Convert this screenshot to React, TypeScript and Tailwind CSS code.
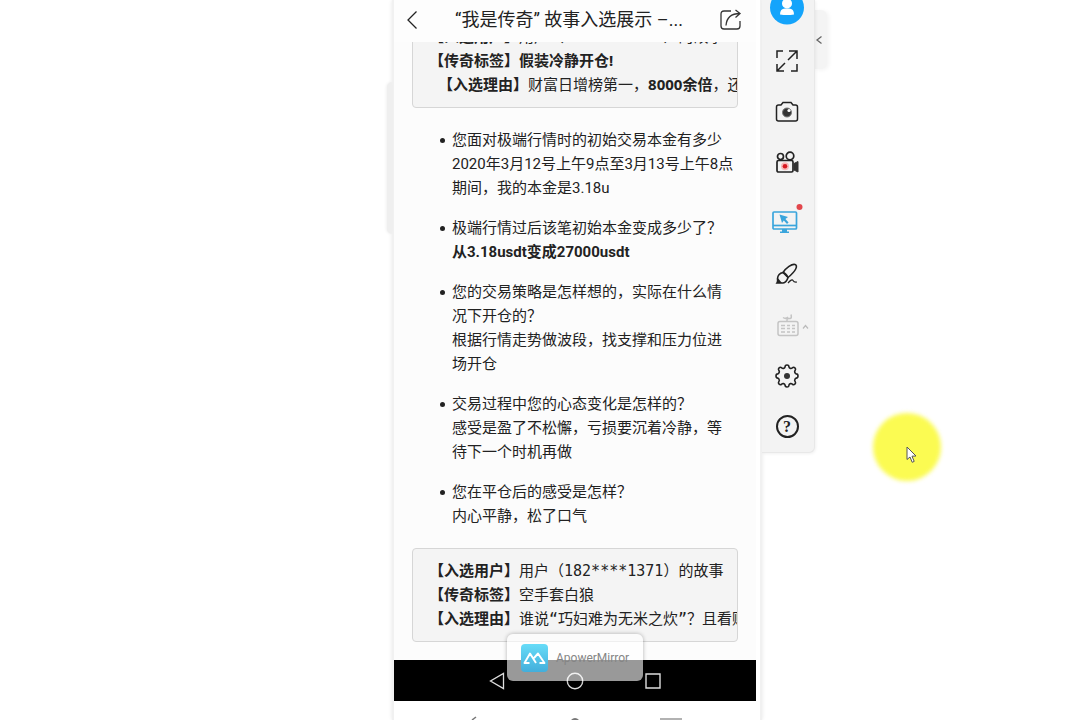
import React from "react";

const stories = [
  {
    question: "您面对极端行情时的初始交易本金有多少",
    answer: "2020年3月12号上午9点至3月13号上午8点期间，我的本金是3.18u",
  },
  {
    question: "极端行情过后该笔初始本金变成多少了？",
    answer: "从3.18usdt变成27000usdt",
    strong: true,
  },
  {
    question: "您的交易策略是怎样想的，实际在什么情况下开仓的？",
    answer: "根据行情走势做波段，找支撑和压力位进场开仓",
  },
  {
    question: "交易过程中您的心态变化是怎样的？",
    answer: "感受是盈了不松懈，亏损要沉着冷静，等待下一个时机再做",
  },
  {
    question: "您在平仓后的感受是怎样？",
    answer: "内心平静，松了口气",
  },
];

const Header = () => (
  <header className="relative z-10 flex h-[42px] shrink-0 items-center justify-between bg-[#fdfdfd] pr-[14px] pb-[2px] pl-3">
    <button type="button" aria-label="返回">
      <svg width="12" height="20" viewBox="0 0 12 20" fill="none" stroke="#222" strokeWidth="1.3">
        <path d="M10.500 1.500 2 10l8.500 8.500" />
      </svg>
    </button>
    <h1 className="text-lg text-[#222]">“我是传奇” 故事入选展示 –...</h1>
    <button type="button" aria-label="分享">
      <svg width="22" height="22" viewBox="1 0 22 22" fill="none" stroke="#333" strokeWidth="1.3">
        <path d="M12 2H5Q2 2 2 5v12q0 3 3 3h13q3 0 3-3v-5" />
        <path d="M7 16.500C7.500 9.500 12 4.500 21 4.500M16.500 1l4.500 3.500-4.500 4" />
      </svg>
    </button>
  </header>
);

const StoryCard = ({ children }: { children: React.ReactNode }) => (
  <pre className="shrink-0 overflow-hidden rounded-sm border border-[#d6d6d6] bg-[#f4f4f4] pt-[9px] pb-[11px] pl-4 font-['Noto_Sans','Noto_Sans_CJK_SC',sans-serif] text-[15px] leading-6">
    {children}
  </pre>
);

const Mono = ({ children }: { children: React.ReactNode }) => (
  <span className="font-['DejaVu_Sans_Mono',monospace] leading-none">{children}</span>
);

const Toast = () => (
  <div className="absolute bottom-[20px] left-1/2 z-20 flex h-[47px] w-[136px] -translate-x-1/2 items-center gap-2 rounded-md bg-white/60 pl-[14px] shadow-[0_0_4px_rgba(0,0,0,0.3)]">
    <svg width="27" height="28" viewBox="0 0 27 28" className="shrink-0">
      <defs>
        <linearGradient id="logo" x1="0" y1="0" x2="0" y2="1">
          <stop offset="0" stopColor="#67dcf8" />
          <stop offset="1" stopColor="#43aedb" />
        </linearGradient>
      </defs>
      <rect width="27" height="28" rx="4" fill="url(#logo)" />
      <path d="M8.500 19H3.500L9 9.500 15 19M13 14l4-4.500L23.500 19h-5" fill="none" stroke="#fff" strokeWidth="1.900" strokeLinejoin="round" />
    </svg>
    <span className="text-xs text-[#858585]">ApowerMirror</span>
  </div>
);

const NavBar = () => (
  <nav className="relative flex h-[41px] shrink-0 items-center justify-center gap-[61px] bg-black">
    <button type="button" aria-label="Back">
      <svg width="16" height="18" viewBox="0 0 16 18" fill="none" stroke="#ddd" strokeWidth="1.3">
        <path d="M14.500 1.500v15L1.500 9z" />
      </svg>
    </button>
    <button type="button" aria-label="Home">
      <svg width="18" height="18" viewBox="0 0 18 18" fill="none" stroke="#ddd" strokeWidth="1.4">
        <circle cx="9" cy="9" r="7.700" />
      </svg>
    </button>
    <button type="button" aria-label="Recent">
      <svg width="16" height="16" viewBox="0 0 16 16" fill="none" stroke="#ddd" strokeWidth="1.4">
        <path d="M1 1h14v14H1z" />
      </svg>
    </button>
    <Toast />
  </nav>
);

const Phone = () => (
  <section className="relative flex h-screen min-w-0 flex-col border-x-2 border-[#f1f1f1] bg-white pr-1 shadow-[0_0_4px_rgba(0,0,0,0.1)]">
    {/* dock handle behind the left edge */}
    <div className="absolute top-[82px] -left-[7px] h-[152px] w-[5px] rounded-l-md bg-[#efefef] shadow-[-1px_0_3px_rgba(0,0,0,0.06)]" />
    <Header />
    <main className="flex min-h-0 flex-1 flex-col justify-end gap-5 overflow-hidden bg-[#fcfcfc] px-[18px] pb-[18px] text-[15px] leading-6 text-[#222]">
      <StoryCard>
        <b>【入选用户】</b>用户（<Mono>138****5206</Mono>）的故事{"\n"}
        <b>【传奇标签】假装冷静开仓!</b>{"\n"}
        <Mono> </Mono><b>【入选理由】</b>财富日增榜第一，<b>8000余倍</b>，还有谁
      </StoryCard>
      <ul className="-mr-[3px] shrink-0 list-none space-y-4 pl-[40px]">
        {stories.map((story) => (
          <li key={story.question} className="relative pr-[11px]">
            <span className="absolute top-[10px] -left-[12px] size-[5px] rounded-full bg-[#222]" />
            <p>{story.question}</p>
            <p className={story.strong ? "-mr-[11px] font-bold" : "-mr-[11px] pr-[5px]"}>{story.answer}</p>
          </li>
        ))}
      </ul>
      <StoryCard>
        <b>【入选用户】</b>用户（<Mono>182****1371</Mono>）的故事{"\n"}
        <b>【传奇标签】</b>空手套白狼{"\n"}
        <b>【入选理由】</b>谁说<Mono>“</Mono>巧妇难为无米之炊<Mono>”</Mono>？且看赌神
      </StoryCard>
    </main>
    <NavBar />
    <footer className="flex h-[19px] shrink-0 items-end justify-center gap-[78px] overflow-hidden">
      <svg width="22" height="4" viewBox="0 0 22 4" stroke="#777" strokeWidth="1.500">
        <path d="m4 4 4-3" />
      </svg>
      <svg width="14" height="3" viewBox="0 0 14 3" fill="#777">
        <path d="M3 3q4-4 8 0z" />
      </svg>
      <svg width="22" height="3" viewBox="0 0 22 3" stroke="#999" strokeWidth="1.500">
        <path d="M0 2h22" />
      </svg>
    </footer>
  </section>
);

const ToolButton = ({ label, tall, children }: { label: string; tall?: boolean; children: React.ReactNode }) => (
  <button
    type="button"
    aria-label={label}
    className={`flex w-full shrink-0 items-center justify-center ${tall ? "h-[60px]" : "h-[51px]"}`}
  >
    {children}
  </button>
);

const Toolbar = () => (
  <aside className="relative self-start">
    <button
      type="button"
      aria-label="Collapse"
      className="absolute top-[10px] -right-[12px] flex h-[59px] w-[13px] items-center justify-center rounded-r-md bg-[#f4f4f4] pr-[3px] shadow-[2px_1px_4px_rgba(0,0,0,0.05)]"
    >
      <svg width="8" height="10" viewBox="0 0 8 10" fill="none" stroke="#666" strokeWidth="1.300" className="shrink-0">
        <path d="M6.500 1.500 2 5l4.500 3.500" />
      </svg>
    </button>
    <div className="relative flex flex-col items-center overflow-hidden rounded-br-md border-r border-b border-[#e8e8e8] bg-[#f3f3f3] pr-[2px] shadow-[1px_1px_3px_rgba(0,0,0,0.06)]">
      <button type="button" aria-label="Account" className="-mt-[10px] mb-[10px]">
        <svg width="34" height="35" viewBox="0 0 34 35">
          <circle cx="17" cy="17.500" r="17" fill="#14a4fb" />
          <circle cx="17" cy="13.500" r="5" fill="#fff" />
          <path d="M10 24.500q0-6 5-6h4q5 0 5 6-7 1-14 0" fill="#fff" />
        </svg>
      </button>
      <ToolButton label="Full screen">
        <svg width="24" height="24" viewBox="0 0 24 24" fill="none" stroke="#222" strokeWidth="1.500">
          <path d="M2 9V2h6M14 2h8v8M22 15v7h-6M9 22H2v-7M22 2l-9 9M2 22l8-8" />
        </svg>
      </ToolButton>
      <ToolButton label="Screenshot">
        <svg width="24" height="24" viewBox="0 0 24 24" fill="none" stroke="#222" strokeWidth="1.500">
          <path d="M3.500 5H6l2-2.500h8L18 5h2.500q2 0 2 2v12q0 2-2 2h-17q-2 0-2-2V7q0-2 2-2z" />
          <circle cx="12" cy="12.500" r="4.500" fill="#333" stroke="#777" strokeWidth="1" />
          <circle cx="14" cy="10.500" r="1.600" fill="#fff" stroke="none" />
        </svg>
      </ToolButton>
      <ToolButton label="Record">
        <svg width="24" height="24" viewBox="0 0 24 24" fill="none" stroke="#222" strokeWidth="1.700">
          <circle cx="5.500" cy="5.500" r="3" />
          <circle cx="15" cy="5" r="3.800" />
          <rect x="2" y="9.500" width="16" height="11.500" rx="1.500" />
          <path d="m19 12.500 4-2v10.500l-4-2z" fill="#333" stroke="#333" strokeWidth="1" />
          <circle cx="10" cy="15.200" r="4" fill="#f8b8b8" stroke="none" />
          <circle cx="10" cy="15.200" r="2.300" fill="#d71920" stroke="none" />
        </svg>
      </ToolButton>
      <ToolButton label="Whiteboard" tall>
        <svg width="32" height="36" viewBox="0 -4 32 36" fill="none" stroke="#3aa5dc" strokeWidth="1.700">
          <rect x="2" y="8" width="23.500" height="17" rx="1" />
          <path d="M2 21.500h23.500" />
          <path d="M11 25h5v2.500h2V29H9v-1.500h2z" fill="#3aa5dc" stroke="none" />
          <path d="m8.500 10.500 2.500 8.500 1.800-2.500 3.200 3.500 1.600-1.600-3.200-3.500 2.600-1.900z" fill="#3aa5dc" stroke="none" />
          <circle cx="28.500" cy="3" r="3" fill="#e2464b" stroke="none" />
        </svg>
      </ToolButton>
      <ToolButton label="Brush">
        <svg width="24" height="24" viewBox="0 0 24 24" fill="none" stroke="#222" strokeWidth="1.600">
          <path d="M8 10.500C11 6 17 1.500 20 2.500s1.500 6-7 13z" />
          <path d="M8 10.500q3 .5 5 5-1.500 5-5 5.500H2q1-1.500.500-4.500Q3 11.500 8 10.500z" />
          <path d="M2 21v-6l5 6z" fill="#222" stroke="none" />
          <path d="M13 21q4-4.500 5-2.500t4 1.500" strokeWidth="1.200" />
        </svg>
      </ToolButton>
      <div className="relative w-full">
        <ToolButton label="Keyboard">
          <svg width="24" height="24" viewBox="0 0 24 24" fill="none" stroke="#c4c4c4" strokeWidth="1.500">
            <rect x="3" y="8.500" width="20" height="14" rx="2" />
            <path d="M12 8V6.500q0-1 2-1h1q2 0 1-4M8 4.500q3 2 5-.5" />
            <path d="M6 12.500h4m2 0h3m2 0h3M6 15.500h4m2 0h3m2 0h3M6 19h4m2 0h3m2 0h3" strokeWidth="1.700" />
          </svg>
        </ToolButton>
        <svg className="absolute top-[25px] right-[3px]" width="7" height="5" viewBox="0 0 7 5" fill="none" stroke="#bbb" strokeWidth="1.200">
          <path d="m1 4.500 2.500-3L6 4.500" />
        </svg>
      </div>
      <ToolButton label="Settings">
        <svg width="24" height="24" viewBox="0 0 24 24" fill="none" stroke="#222" strokeWidth="1.600" strokeLinejoin="round">
          <path d="M10 3.200Q10 1 12 1t2 2.200q.2.900 1.500 1.200 1 .2 1.800-.5 1.300-1.300 2.600-.1t.2 2.800q-.7.900-.3 1.800.5 1.300 1.400 1.500Q23 10 23 12t-1.800 2.100q-.9.200-1.400 1.500-.4.900.3 1.800 1.100 1.600-.2 2.800t-2.600-.1q-.8-.7-1.800-.5-1.300.3-1.500 1.200Q14 23 12 23t-2-2.200q-.2-.9-1.500-1.200-1-.2-1.800.5-1.300 1.300-2.600.1t-.2-2.800q.7-.9.300-1.800-.5-1.300-1.400-1.500Q1 14 1 12t1.800-2.100q.9-.2 1.400-1.500.4-.9-.3-1.800Q2.800 5 4.100 3.800t2.600.1q.8.700 1.800.5Q9.800 4.100 10 3.200z" />
          <circle cx="12" cy="12" r="3" fill="#333" stroke="none" />
        </svg>
      </ToolButton>
      <ToolButton label="Help">
        <span className="flex size-[23px] items-center justify-center rounded-full border-2 border-[#222] font-['Liberation_Serif',serif] text-base leading-4 font-bold text-[#222]">
          ?
        </span>
      </ToolButton>
    </div>
  </aside>
);

// click highlight with the mouse pointer on top
const Pointer = () => (
  <div className="pointer-events-none absolute top-[413px] left-[873px] size-[68px]">
    <div className="size-full rounded-full bg-[#fbfb52] blur-[2px]" />
    <svg className="absolute top-[33px] left-[33px]" width="12" height="18" viewBox="0 0 12 18" fill="#fff" stroke="#555" strokeWidth="1">
      <path d="M1 1v12.500l3-2.500 2.200 5.300 2-.9L6 10.200l4-.2z" />
    </svg>
  </div>
);

export default function App() {
  return (
    <div className="relative grid min-h-screen grid-cols-[392fr_370px_53px_267fr] overflow-hidden bg-white font-[Roboto,'Noto_Sans_CJK_SC',sans-serif]">
      <div className="col-start-2">
        <Phone />
      </div>
      <Toolbar />
      <Pointer />
    </div>
  );
}
